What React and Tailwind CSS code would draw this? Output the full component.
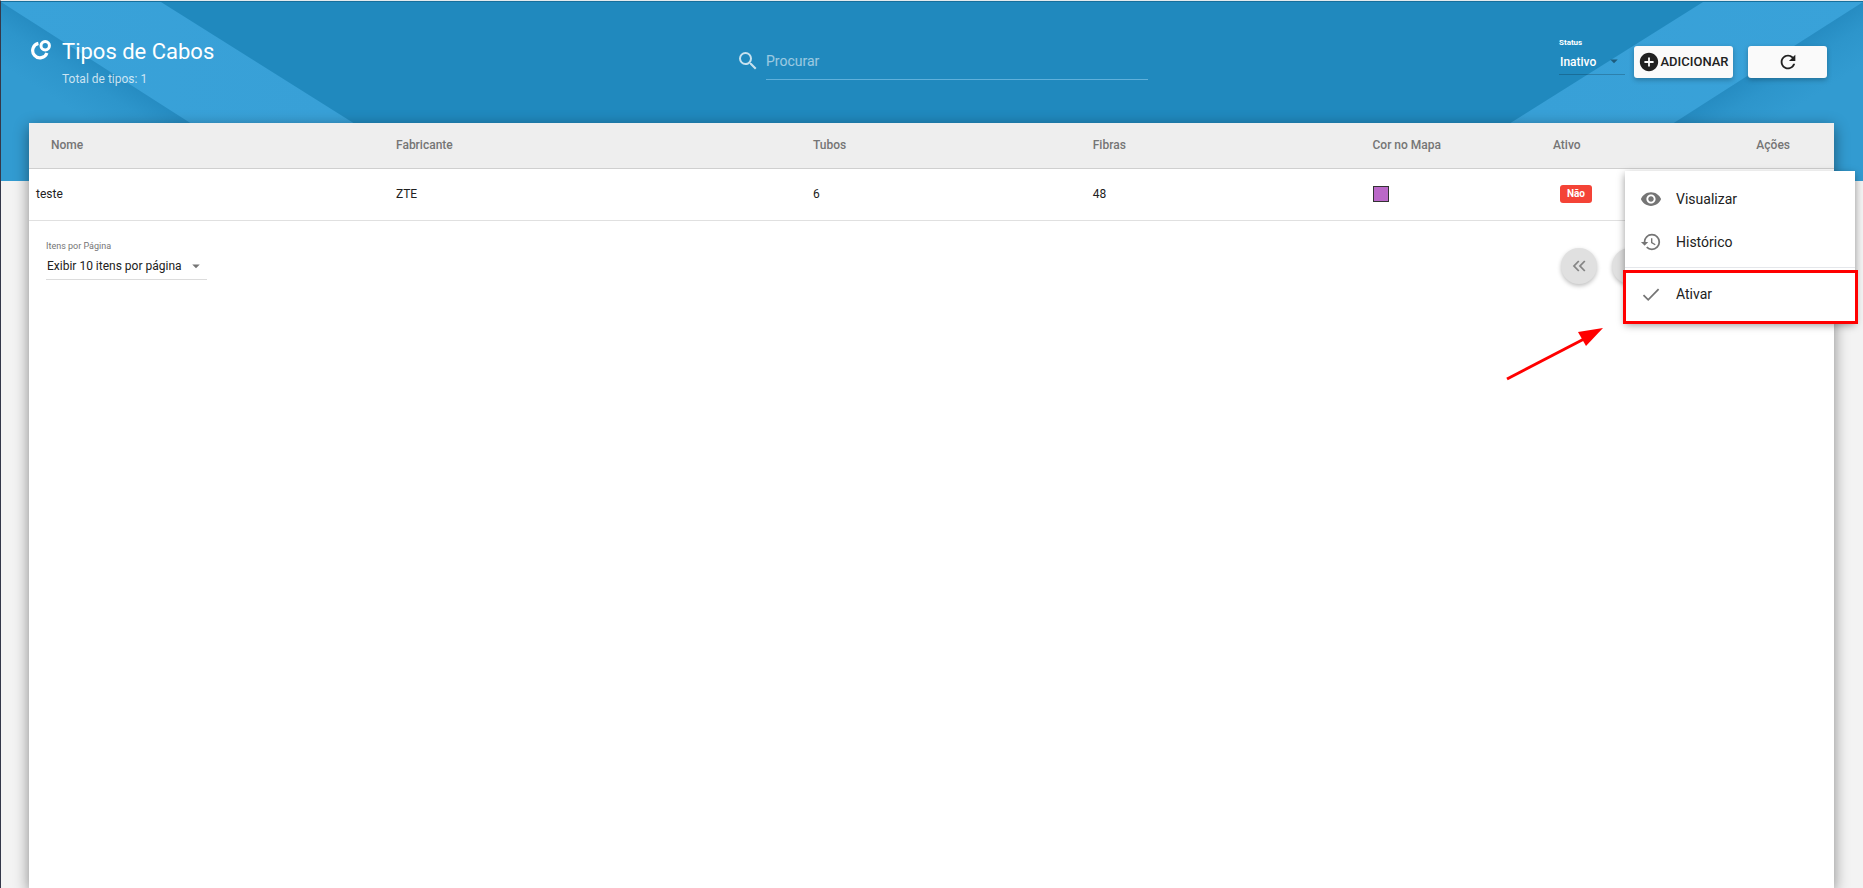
import React from 'react';
import {
  MdSearch,
  MdAddCircle,
  MdRefresh,
  MdRemoveRedEye,
  MdHistory,
  MdArrowDropDown,
} from 'react-icons/md';

const cables = [
  { name: 'teste', maker: 'ZTE', tubes: 6, fibers: 48, color: '#ba68c8', active: false },
];

const CableIcon = () => (
  <svg viewBox="0 0 20 20" className="h-5 w-5" fill="none" stroke="#fff" strokeWidth="3.2" aria-hidden="true">
    <path d="M7.4 3.4A7.3 7.3 0 1 0 15.9 12.9" />
    <circle cx="14.2" cy="5.8" r="4.2" strokeWidth="3" />
  </svg>
);

/* Diagonal ribbons behind the page title */
const HeaderPattern = () => (
  <svg
    viewBox="0 0 1863 180"
    preserveAspectRatio="none"
    className="absolute inset-0 h-full w-full"
    aria-hidden="true"
  >
    <defs>
      <linearGradient id="band" x1="0" y1="0" x2="1" y2="0">
        <stop offset="0" stopColor="#39a2d9" />
        <stop offset="0.75" stopColor="#38a0d7" />
        <stop offset="1" stopColor="#3299cf" />
      </linearGradient>
      <linearGradient id="fold" gradientUnits="userSpaceOnUse" x1="97" y1="62" x2="68" y2="107">
        <stop offset="0" stopColor="#268cc2" />
        <stop offset="0.4" stopColor="#2d95cb" />
        <stop offset="1" stopColor="#329bd1" />
      </linearGradient>
      <g id="ribbon">
        <path d="M0 0H160L445 180H0Z" fill="url(#band)" />
        <path d="M0 0L280 180H0Z" fill="url(#fold)" />
      </g>
    </defs>
    <rect width="1863" height="180" fill="#2089be" />
    <use href="#ribbon" />
    <use href="#ribbon" transform="translate(1863 0) scale(-1 1)" />
  </svg>
);

/* One chevron for a step, two for a jump to either end */
const Chevrons = ({ double = false, flip = false }) => (
  <svg
    viewBox="0 0 20 20"
    className={flip ? 'h-5 w-5 rotate-180' : 'h-5 w-5'}
    fill="none"
    stroke="currentColor"
    strokeWidth="1.8"
    aria-hidden="true"
  >
    <path d={double ? 'M9.8 5L5 10L9.8 15M15.8 5L11 10L15.8 15' : 'M12.5 5L7.5 10L12.5 15'} />
  </svg>
);

const PageButton = ({ label, children }) => (
  <button
    type="button"
    aria-label={label}
    className="flex h-9 w-9 items-center justify-center rounded-full bg-[#e0e0e0] text-[#858585] shadow-[0_2px_4px_rgba(0,0,0,0.25)]"
  >
    {children}
  </button>
);

const MenuItem = ({ icon, children }) => (
  <button type="button" role="menuitem" className="flex h-[43px] w-full items-center gap-[14px] px-[15px] text-left text-sm text-[#212121]">
    <span className="text-[#757575]">{icon}</span>
    {children}
  </button>
);

const RowMenu = () => (
  <div
    role="menu"
    className="absolute top-[3px] -right-[21px] z-10 w-[230px] bg-white pt-[6px] pb-[7px] shadow-[0_3px_8px_rgba(0,0,0,0.4)]"
  >
    <MenuItem icon={<MdRemoveRedEye size={22} />}>Visualizar</MenuItem>
    <MenuItem icon={<MdHistory size={22} />}>Histórico</MenuItem>
    <div className="my-1 h-px bg-gray-200" />
    <MenuItem
      icon={
        <svg viewBox="0 0 22 22" className="h-[22px] w-[22px]" fill="none" stroke="currentColor" strokeWidth="1.8" aria-hidden="true">
          <path d="M3.5 12.2L8.2 16.8L18.6 6.2" />
        </svg>
      }
    >
      Ativar
    </MenuItem>
    {/* Highlight and pointer over the last action */}
    <div className="pointer-events-none absolute -right-[3px] -bottom-[2px] -left-[2px] h-[54px] border-3 border-[#ff0000]" />
    <svg viewBox="0 0 98 54" className="pointer-events-none absolute top-[156px] right-[251px] h-[54px] w-[98px]" aria-hidden="true">
      <path d="M1 52L78 12" stroke="#ff0000" strokeWidth="3" fill="none" />
      <path d="M97 1L72 5L80 19Z" fill="#ff0000" />
    </svg>
  </div>
);

const App = () => {
  return (
    <div className="relative flex min-h-screen flex-col border-t border-l border-t-[#e4eaee] border-l-[#34384a] bg-[#f3f3f3] font-['Roboto',sans-serif] text-xs text-[#212121]">
      <div className="absolute inset-x-0 top-0 h-[180px] border-t border-[#176f9c]">
        <HeaderPattern />
      </div>

      {/* Header */}
      <header className="relative flex h-[122px] items-start pr-9 pl-[30px] text-white">
        <div className="flex flex-1 items-start gap-[11px] pt-[35px]">
          <div className="pt-1">
            <CableIcon />
          </div>
          <div>
            <h1 className="text-[22px] leading-8">Tipos de Cabos</h1>
            <p className="text-xs leading-[22px] text-white/75">Total de tipos: 1</p>
          </div>
        </div>

        <label className="ml-[26px] flex w-[412px] items-center gap-[6px] pt-[41px]">
          <MdSearch size={24} className="text-white/75" />
          <input
            type="search"
            aria-label="Procurar"
            placeholder="Procurar"
            className="h-[38px] min-w-0 flex-1 border-b border-[#5fb0db] bg-transparent text-sm outline-none placeholder:text-white/55"
          />
        </label>

        <div className="flex flex-1 items-start justify-end pt-9">
          <div className="relative mr-[9px] w-[66px]">
            <label htmlFor="status" className="block text-[8px] leading-3 font-bold">Status</label>
            <select
              id="status"
              defaultValue="Inativo"
              className="block h-[26px] w-full appearance-none border-b border-black/20 pt-px pl-px text-xs font-medium outline-none"
            >
              <option>Inativo</option>
            </select>
            <MdArrowDropDown size={18} className="pointer-events-none absolute right-[2px] bottom-[5px] text-[#1d5c7d]" />
          </div>
          <button
            type="button"
            className="mt-[9px] mr-[15px] flex h-8 w-[99px] items-center justify-center rounded-[3px] bg-[#fafafa] text-[13px] font-medium text-[#212121] shadow-[0_2px_5px_rgba(0,0,0,0.26)]"
          >
            <MdAddCircle size={22} className="shrink-0" />
            ADICIONAR
          </button>
          <button
            type="button"
            aria-label="Atualizar"
            className="mt-[9px] flex h-8 w-[79px] items-center justify-center rounded-[3px] bg-[#fafafa] text-[#212121] shadow-[0_2px_5px_rgba(0,0,0,0.26)]"
          >
            <MdRefresh size={22} />
          </button>
        </div>
      </header>

      {/* Table card */}
      <main className="relative mr-[29px] ml-7 flex-1 bg-white shadow-[0_4px_14px_rgba(0,0,0,0.45)]">
        <table className="w-full table-fixed border-collapse text-left">
          <colgroup>
            <col className="w-[20%]" />
            <col className="w-[23.1%]" />
            <col className="w-[15.5%]" />
            <col className="w-[15.5%]" />
            <col className="w-[10%]" />
            <col />
            <col />
          </colgroup>
          <thead>
            <tr className="h-[45px] border-b border-[#cfcfcf] bg-[#eeeeee] text-[#757575]">
              <th className="pl-[22px] font-medium">Nome</th>
              <th className="pl-[6px] font-medium">Fabricante</th>
              <th className="pl-[6px] font-medium">Tubos</th>
              <th className="pl-[6px] font-medium">Fibras</th>
              <th className="pl-[6px] font-medium">Cor no Mapa</th>
              <th className="pl-[6px] font-medium">Ativo</th>
              <th className="pr-11 text-right font-medium">Ações</th>
            </tr>
          </thead>
          <tbody>
            {cables.map((cable) => (
              <tr key={cable.name} className="relative h-[52px] border-b border-[#e0e0e0]">
                <td className="pl-[7px]">{cable.name}</td>
                <td className="pl-[6px]">{cable.maker}</td>
                <td className="pl-[6px]">{cable.tubes}</td>
                <td className="pl-[6px]">{cable.fibers}</td>
                <td className="pl-[7px]">
                  <div className="h-4 w-4 border border-[#333]" style={{ backgroundColor: cable.color }} />
                </td>
                <td className="pl-[13px]">
                  <span className="inline-block h-[18px] w-8 rounded-[3px] bg-[#f44336] text-center text-[10px] leading-[18px] font-bold text-white">
                    {cable.active ? 'Sim' : 'Não'}
                  </span>
                </td>
                <td>
                  <RowMenu />
                </td>
              </tr>
            ))}
          </tbody>
        </table>

        {/* Pagination */}
        <div className="flex items-start justify-between pt-[17px] pr-[84px] pl-[17px]">
          <div className="relative w-[161px]">
            <label htmlFor="per-page" className="block text-[9px] leading-4 text-[#757575]">Itens por Página</label>
            <select id="per-page" className="block h-[26px] w-full appearance-none border-b border-[#dcdcdc] pl-px text-xs outline-none">
              <option>Exibir 10 itens por página</option>
            </select>
            <MdArrowDropDown size={18} className="pointer-events-none absolute right-[2px] bottom-[5px] text-[#757575]" />
          </div>
          <div className="flex gap-[15px] pt-[10px]">
            <PageButton label="Primeira página"><Chevrons double /></PageButton>
            <PageButton label="Página anterior"><Chevrons /></PageButton>
            <PageButton label="Próxima página"><Chevrons flip /></PageButton>
            <PageButton label="Última página"><Chevrons double flip /></PageButton>
          </div>
        </div>
      </main>
    </div>
  );
};

export default App;
